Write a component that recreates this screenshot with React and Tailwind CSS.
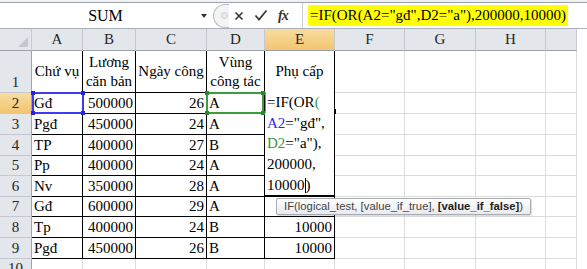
import React from "react";

const COLS = [
  { key: "A", w: "w-[51px]" },
  { key: "B", w: "w-[53px]" },
  { key: "C", w: "w-[71px]" },
  { key: "D", w: "w-[58px]" },
  { key: "E", w: "w-[70px]" },
  { key: "F", w: "w-[70px]" },
  { key: "G", w: "w-[71px]" },
  { key: "H", w: "w-[70px]" },
  { key: "I", w: "w-[31px]" },
];

const ROWS = [
  { n: 2, h: "h-[21px]", v: ["Gđ", "500000", "26", "A", ""] },
  { n: 3, h: "h-[21px]", v: ["Pgđ", "450000", "24", "A", ""] },
  { n: 4, h: "h-[21px]", v: ["TP", "400000", "27", "B", ""] },
  { n: 5, h: "h-[20px]", v: ["Pp", "400000", "24", "A", ""] },
  { n: 6, h: "h-[21px]", v: ["Nv", "350000", "28", "A", ""] },
  { n: 7, h: "h-[20px]", v: ["Gđ", "600000", "29", "A", ""] },
  { n: 8, h: "h-[21px]", v: ["Tp", "400000", "24", "B", "10000"] },
  { n: 9, h: "h-[21px]", v: ["Pgđ", "450000", "26", "B", "10000"] },
];

const HEAD1 = [
  ["Chứ vụ"],
  ["Lương", "căn bản"],
  ["Ngày công"],
  ["Vùng", "công tác"],
  ["Phụ cấp"],
];

function RowHead({ n, active, bottom }) {
  return (
    <div
      className={
        "w-[32px] shrink-0 flex justify-center border-r border-b border-r-[#9ea3aa] border-b-[#c5c9cf] text-[15px] leading-[19px] text-[#262626] " +
        (bottom ? "items-end " : "items-center ") +
        (active ? "bg-gradient-to-b from-[#f9dba0] to-[#f2c56f]" : "bg-[#e3e6eb]")
      }
    >
      {n}
    </div>
  );
}

function Corner({ w }) {
  return <div className={w + " shrink-0 border-r border-[#dadcdd]"} />;
}

export default function App() {
  return (
    <div className="w-[587px] h-[269px] overflow-hidden bg-white relative font-['Liberation_Serif',serif] text-black">
      {/* thanh công thức */}
      <div className="h-[3px] bg-[#eef0f3] border-b border-[#9da3ab]" />
      <div className="h-[26px] flex items-center border-b border-[#a9b0b8]">
        <div className="w-[213px] h-full flex items-center relative">
          <span className="flex-1 text-center text-[16px] pl-[10px]">SUM</span>
          <span className="w-0 h-0 mr-[6px] border-l-[3px] border-r-[3px] border-t-[4px] border-l-transparent border-r-transparent border-t-[#333]" />
        </div>
        <div className="w-[16px] h-[24px] rounded-l-full border border-r-0 border-[#b7bcc3] bg-[#f3f4f6] flex items-center justify-end pr-[1px]">
          <span className="w-[7px] h-[7px] rounded-full border border-[#c9cdd2] bg-[#e8eaed]" />
        </div>
        <div className="w-[73px] h-full flex items-center">
          <svg width="12" height="12" viewBox="0 0 12 12" className="ml-[4px]">
            <path d="M2.5 2.5 L9.5 9.5 M9.5 2.5 L2.5 9.5" stroke="#3a3a3a" strokeWidth="1.7" />
          </svg>
          <svg width="14" height="13" viewBox="0 0 14 13" className="ml-[9px]">
            <path d="M1.5 6.5 L5 10.5 L12.5 1.5" stroke="#3a3a3a" strokeWidth="1.8" fill="none" />
          </svg>
          <span className="ml-[10px] text-[14px] italic font-bold text-[#333] tracking-[-1px]">fx</span>
        </div>
        <div className="w-px h-full bg-[#c9cdd2]" />
        <div className="ml-[5px] h-[21px] px-[2px] bg-[#ffff00] text-[15px] leading-[21px] whitespace-nowrap">
          =IF(OR(A2="gđ",D2="a"),200000,10000)
        </div>
      </div>

      {/* tiêu đề cột */}
      <div className="flex h-[22px]">
        <div className="w-[32px] shrink-0 bg-[#e3e6eb] border-r border-b border-r-[#c5c9cf] border-b-[#9ea3aa] relative">
          <span className="absolute right-[3px] bottom-[3px] w-0 h-0 [border-bottom:10px_solid_#c4c8ce] [border-left:10px_solid_transparent]" />
        </div>
        {COLS.map((c) => (
          <div
            key={c.key}
            className={
              c.w +
              " shrink-0 flex items-center justify-center border-r border-b border-r-[#c5c9cf] border-b-[#9ea3aa] text-[15px] text-[#262626] " +
              (c.key === "E" ? "bg-gradient-to-b from-[#f9dba0] to-[#f2c56f]" : "bg-[#e3e6eb]")
            }
          >
            {c.key === "I" ? "" : c.key}
          </div>
        ))}
      </div>

      {/* hàng 1 */}
      <div className="flex h-[42px]">
        <RowHead n={1} bottom />
        {COLS.map((c, i) =>
          i < 5 ? (
            <div
              key={c.key}
              className={c.w + " shrink-0 flex flex-col items-center justify-center border-r border-b border-black text-[15px] leading-[19px]"}
            >
              {HEAD1[i].map((t) => (
                <span key={t}>{t}</span>
              ))}
            </div>
          ) : (
            <div key={c.key} className={c.w + " shrink-0 border-r border-b border-[#dadcdd]"} />
          )
        )}
      </div>

      {/* hàng dữ liệu */}
      {ROWS.map((r) => (
        <div key={r.n} className={"flex " + r.h}>
          <RowHead n={r.n} active={r.n === 2} />
          {COLS.map((c, i) =>
            i < 5 ? (
              <div
                key={c.key}
                className={
                  c.w +
                  " shrink-0 flex items-center border-r border-b border-black text-[15px] leading-[19px] " +
                  (i === 0 || i === 3 ? "justify-start pl-[2px]" : "justify-end pr-[2px]")
                }
              >
                {r.v[i]}
              </div>
            ) : (
              <div key={c.key} className={c.w + " shrink-0 border-r border-b border-[#dadcdd]"} />
            )
          )}
        </div>
      ))}

      {/* hàng 10 */}
      <div className="flex h-[11px]">
        <div className="w-[32px] shrink-0 bg-[#e3e6eb] border-r border-[#9ea3aa] flex justify-center text-[15px] leading-[19px] text-[#262626]">
          10
        </div>
        {COLS.map((c) => (
          <Corner key={c.key} w={c.w} />
        ))}
      </div>

      {/* vùng chọn A2 */}
      <div className="absolute left-[32px] top-[92px] w-[52px] h-[22px] border-2 border-[#3b3bf0]">
        <span className="absolute -left-[3px] -top-[3px] w-[4px] h-[4px] bg-[#2424e8]" />
        <span className="absolute -right-[3px] -top-[3px] w-[4px] h-[4px] bg-[#2424e8]" />
        <span className="absolute -left-[3px] -bottom-[3px] w-[4px] h-[4px] bg-[#2424e8]" />
        <span className="absolute -right-[3px] -bottom-[3px] w-[4px] h-[4px] bg-[#2424e8]" />
      </div>

      {/* vùng chọn D2 */}
      <div className="absolute left-[206px] top-[92px] w-[58px] h-[22px] border-2 border-[#3f9b3f]">
        <span className="absolute -left-[3px] -top-[3px] w-[4px] h-[4px] bg-[#2a8a2a]" />
        <span className="absolute -right-[3px] -top-[3px] w-[4px] h-[4px] bg-[#2a8a2a]" />
        <span className="absolute -left-[3px] -bottom-[3px] w-[4px] h-[4px] bg-[#2a8a2a]" />
        <span className="absolute -right-[3px] -bottom-[3px] w-[4px] h-[4px] bg-[#2a8a2a]" />
      </div>

      {/* ô đang sửa E2 */}
      <div className="absolute left-[265px] top-[92px] w-[70px] h-[104px] bg-white border-r border-b border-black pl-[2px] text-[15px] leading-[20.7px] whitespace-nowrap">
        <span className="absolute left-0 top-0 w-px h-[21px] bg-[#d65ad6]" />
        <span className="absolute -right-[2px] top-[17px] w-[2px] h-[5px] bg-black" />
        <div>
          =IF(OR<span className="text-[#2f9a5a]">(</span>
        </div>
        <div>
          <span className="text-[#2b2bf5]">A2</span>="gđ",
        </div>
        <div>
          <span className="text-[#3a963a]">D2</span>="a"),
        </div>
        <div>200000,</div>
        <div className="flex items-center">
          10000
          <span className="inline-block w-px h-[15px] bg-black" />)
        </div>
      </div>

      {/* chú thích hàm */}
      <div className="absolute left-[276px] top-[198px] h-[17px] px-[7px] flex items-center rounded-[2px] border border-[#a7abb0] bg-gradient-to-b from-white to-[#e9eaef] shadow-[1px_1px_1px_rgba(0,0,0,0.15)] font-['Liberation_Sans',sans-serif] text-[11.3px] text-[#444] whitespace-nowrap">
        IF(logical_test, [value_if_true], <span className="font-bold text-[#222] ml-[3px]">[value_if_false]</span>)
      </div>
    </div>
  );
}
